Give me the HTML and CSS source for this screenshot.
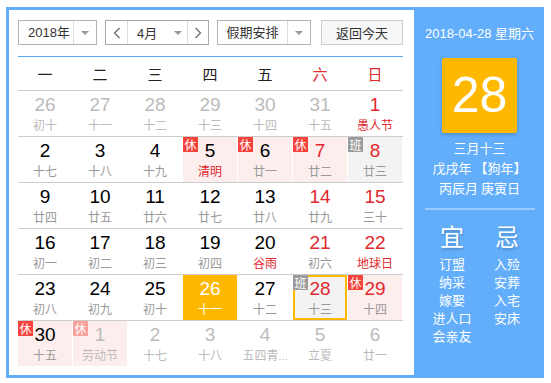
FILE: index.html
```html
<!DOCTYPE html>
<html lang="zh-CN">
<head>
<meta charset="utf-8">
<title>万年历</title>
<link rel="stylesheet" href="styles.css">
</head>
<body>
<div class="cal">
  <div class="main">
    <div class="toolbar">
      <div class="sel year">
        <span class="txt">2018年</span>
        <span class="drop"><i class="tri"></i></span>
      </div>
      <div class="sel month">
        <span class="nav"><svg width="8" height="12" viewBox="0 0 8 12"><polyline points="6.5,1 1.5,6 6.5,11" fill="none" stroke="#666" stroke-width="1.2"/></svg></span>
        <span class="mtxt">4月<i class="tri"></i></span>
        <span class="nav next"><svg width="8" height="12" viewBox="0 0 8 12"><polyline points="1.5,1 6.5,6 1.5,11" fill="none" stroke="#666" stroke-width="1.2"/></svg></span>
      </div>
      <div class="sel holiday">
        <span class="txt">假期安排</span>
        <span class="drop"><i class="tri"></i></span>
      </div>
      <button class="today">返回今天</button>
    </div>
    <div class="rule"></div>
    <div class="weekhead">
      <span>一</span><span>二</span><span>三</span><span>四</span><span>五</span><span class="red">六</span><span class="red">日</span>
    </div>
    <div class="week">
      <div class="cell other"><div class="n">26</div><div class="l">初十</div></div>
      <div class="cell other"><div class="n">27</div><div class="l">十一</div></div>
      <div class="cell other"><div class="n">28</div><div class="l">十二</div></div>
      <div class="cell other"><div class="n">29</div><div class="l">十三</div></div>
      <div class="cell other"><div class="n">30</div><div class="l">十四</div></div>
      <div class="cell other"><div class="n">31</div><div class="l">十五</div></div>
      <div class="cell wknd"><div class="n">1</div><div class="l fest">愚人节</div></div>
    </div>
    <div class="week">
      <div class="cell"><div class="n">2</div><div class="l">十七</div></div>
      <div class="cell"><div class="n">3</div><div class="l">十八</div></div>
      <div class="cell"><div class="n">4</div><div class="l">十九</div></div>
      <div class="cell rest"><span class="badge">休</span><div class="n">5</div><div class="l fest">清明</div></div>
      <div class="cell rest"><span class="badge">休</span><div class="n">6</div><div class="l">廿一</div></div>
      <div class="cell rest wknd"><span class="badge">休</span><div class="n">7</div><div class="l">廿二</div></div>
      <div class="cell work wknd"><span class="badge grey">班</span><div class="n">8</div><div class="l">廿三</div></div>
    </div>
    <div class="week">
      <div class="cell"><div class="n">9</div><div class="l">廿四</div></div>
      <div class="cell"><div class="n">10</div><div class="l">廿五</div></div>
      <div class="cell"><div class="n">11</div><div class="l">廿六</div></div>
      <div class="cell"><div class="n">12</div><div class="l">廿七</div></div>
      <div class="cell"><div class="n">13</div><div class="l">廿八</div></div>
      <div class="cell wknd"><div class="n">14</div><div class="l">廿九</div></div>
      <div class="cell wknd"><div class="n">15</div><div class="l">三十</div></div>
    </div>
    <div class="week">
      <div class="cell"><div class="n">16</div><div class="l">初一</div></div>
      <div class="cell"><div class="n">17</div><div class="l">初二</div></div>
      <div class="cell"><div class="n">18</div><div class="l">初三</div></div>
      <div class="cell"><div class="n">19</div><div class="l">初四</div></div>
      <div class="cell"><div class="n">20</div><div class="l fest">谷雨</div></div>
      <div class="cell wknd"><div class="n">21</div><div class="l">初六</div></div>
      <div class="cell wknd"><div class="n">22</div><div class="l fest">地球日</div></div>
    </div>
    <div class="week">
      <div class="cell"><div class="n">23</div><div class="l">初八</div></div>
      <div class="cell"><div class="n">24</div><div class="l">初九</div></div>
      <div class="cell"><div class="n">25</div><div class="l">初十</div></div>
      <div class="cell today-cell"><div class="n">26</div><div class="l">十一</div></div>
      <div class="cell"><div class="n">27</div><div class="l">十二</div></div>
      <div class="cell work wknd selected"><span class="badge grey">班</span><div class="n">28</div><div class="l">十三</div></div>
      <div class="cell rest wknd"><span class="badge">休</span><div class="n">29</div><div class="l">十四</div></div>
    </div>
    <div class="week last">
      <div class="cell rest"><span class="badge">休</span><div class="n">30</div><div class="l">十五</div></div>
      <div class="cell rest other"><span class="badge faded">休</span><div class="n">1</div><div class="l">劳动节</div></div>
      <div class="cell other"><div class="n">2</div><div class="l">十七</div></div>
      <div class="cell other"><div class="n">3</div><div class="l">十八</div></div>
      <div class="cell other"><div class="n">4</div><div class="l">五四青<span class="dots">...</span></div></div>
      <div class="cell other"><div class="n">5</div><div class="l">立夏</div></div>
      <div class="cell other"><div class="n">6</div><div class="l">廿一</div></div>
    </div>
  </div>
  <div class="panel">
    <div class="pdate">2018-04-28 星期六</div>
    <div class="big">28</div>
    <div class="lunar">
      <div>三月十三</div>
      <div>戊戌年 【狗年】</div>
      <div>丙辰月 庚寅日</div>
    </div>
    <div class="divider"></div>
    <div class="yj">
      <div class="col">
        <div class="head">宜</div>
        <ul class="items">
          <li>订盟</li><li>纳采</li><li>嫁娶</li><li>进人口</li><li>会亲友</li>
        </ul>
      </div>
      <div class="col">
        <div class="head">忌</div>
        <ul class="items">
          <li>入殓</li><li>安葬</li><li>入宅</li><li>安床</li>
        </ul>
      </div>
    </div>
  </div>
</div>
</body>
</html>
```

FILE: styles.css
```css
* { box-sizing: border-box; }

body {
  margin: 0;
  background: #fff;
  font-family: "Liberation Sans", "Noto Sans CJK SC", sans-serif;
  color: #000;
}

.cal {
  margin: 7px 0 0 6px;
  width: 538px;
  height: 371px;
  border: 3px solid #62aefb;
  display: flex;
  background: #fff;
}

.main {
  width: 405px;
  padding: 10px 11px 0 9px;
}

/* toolbar */
.toolbar {
  display: flex;
  height: 25px;
  font-size: 13px;
  color: #333;
}

.sel {
  display: flex;
  height: 25px;
  border: 1px solid #b4b4b4;
  background: #fff;
}

.sel .txt {
  display: flex;
  align-items: center;
  justify-content: center;
  line-height: 23px;
}

.sel .drop {
  width: 22px;
  border-left: 1px solid #dcdcdc;
  display: flex;
  align-items: center;
  justify-content: center;
}

.tri {
  display: inline-block;
  width: 0;
  height: 0;
  border-left: 4px solid transparent;
  border-right: 4px solid transparent;
  border-top: 4px solid #999;
}

.year { width: 79px; }
.year .txt { width: 54px; padding-left: 6px; }

.month {
  width: 104px;
  margin-left: 8px;
  border-color: #a8a8a8;
}
.month .nav {
  width: 21px;
  display: flex;
  align-items: center;
  justify-content: center;
}
.month .nav.next {
  width: 20px;
  border-left: 1px solid #dcdcdc;
}
.month .mtxt {
  width: 60px;
  border-left: 1px solid #dcdcdc;
  display: flex;
  align-items: center;
  padding-left: 9px;
  gap: 17px;
}

.holiday {
  width: 94px;
  margin-left: 8px;
}
.holiday .txt { width: 69px; }

.today {
  margin-left: 10px;
  width: 82px;
  height: 25px;
  border: 1px solid #cdcdcd;
  background: #f6f6f6;
  font-family: "Noto Sans CJK SC", sans-serif;
  font-size: 13px;
  color: #333;
  padding: 0;
}

.rule {
  margin-top: 11px;
  width: 385px;
  height: 1px;
  background: #5aa9f6;
}

/* grid */
.weekhead {
  width: 385px;
  height: 34px;
  border-bottom: 1px solid #cccccc;
  display: grid;
  grid-template-columns: repeat(7, 54px);
  column-gap: 1px;
  align-items: center;
  text-align: center;
  font-family: "Noto Sans CJK SC", sans-serif;
  font-size: 15px;
  color: #222;
}
.weekhead .red { color: #e0282e; }

.week {
  width: 385px;
  height: 46px;
  border-bottom: 1px solid #cccccc;
  display: grid;
  grid-template-columns: repeat(7, 54px);
  column-gap: 1px;
}
.week.last { border-bottom: 0; }

.cell {
  position: relative;
  text-align: center;
  padding-top: 3px;
  height: 45px;
}

.cell .n {
  font-size: 19px;
  line-height: 22px;
  color: #000;
}

.cell .l {
  font-family: "Noto Sans CJK SC", sans-serif;
  font-size: 12px;
  line-height: 18px;
  color: #999;
  white-space: nowrap;
}
.cell .l .dots {
  font-family: "Liberation Sans", sans-serif;
  font-size: 11px;
}

.cell.wknd .n { color: #e0282e; }
.cell .l.fest { color: #e0282e; }

.cell.other .n,
.cell.other .l { color: #bbb; }

.cell.rest { background: #fdeeee; }
.cell.work { background: #f3f3f3; }

.cell.today-cell { background: #ffb800; }
.cell.today-cell .n,
.cell.today-cell .l { color: #fff; }

.cell.selected { box-shadow: inset 0 0 0 2px #ffb800; }

.badge {
  position: absolute;
  top: 0;
  left: 0;
  width: 15px;
  height: 15px;
  background: #f4433c;
  color: #fff;
  font-family: "Noto Sans CJK SC", sans-serif;
  font-size: 12px;
  line-height: 15px;
  text-align: center;
}
.badge.grey { background: #9b9b9b; }
.badge.faded { background: #f7a19c; }

/* right panel */
.panel {
  flex: 1;
  background: #62aefb;
  color: #fff;
  padding-left: 4px;
  text-align: center;
}

.pdate {
  margin-top: 15px;
  font-size: 13px;
  line-height: 18px;
}

.big {
  width: 75px;
  height: 75px;
  margin: 15px auto 0;
  background: #ffb800;
  border-radius: 2px;
  box-shadow: 0 2px 4px rgba(0, 0, 0, 0.18);
  font-size: 50px;
  line-height: 75px;
}

.lunar {
  margin-top: 5px;
  font-family: "Noto Sans CJK SC", sans-serif;
  font-size: 13px;
  line-height: 20px;
}

.divider {
  width: 110px;
  height: 2px;
  margin: 10px auto 0;
  background: rgba(255, 255, 255, 0.35);
}

.yj {
  width: 110px;
  margin: 0 auto;
  display: flex;
  font-family: "Noto Sans CJK SC", sans-serif;
}
.yj .col { width: 55px; }
.yj .head {
  margin-top: 11px;
  font-size: 24px;
  line-height: 30px;
  text-shadow: 1px 2px 2px rgba(0, 0, 0, 0.18);
}
.items {
  list-style: none;
  margin: 4px 0 0;
  padding: 0;
  font-size: 13px;
  line-height: 18px;
}
```
